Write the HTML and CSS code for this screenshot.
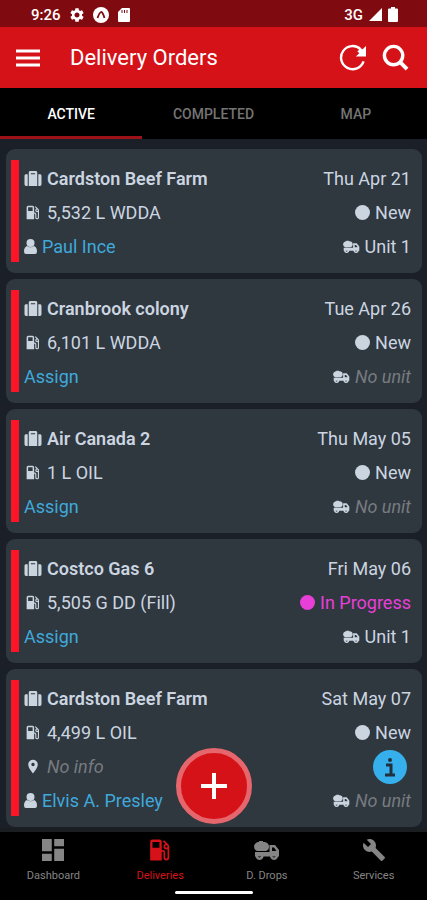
FILE: index.html
```html
<!DOCTYPE html>
<html lang="en">
<head>
    <meta charset="UTF-8">
    <meta name="viewport" content="width=device-width, initial-scale=1">
    <title>Delivery Orders</title>
    <link rel="stylesheet" href="styles.css">
</head>
<body>
    <!-- Shared icons -->
    <svg class="sprite" aria-hidden="true">
        <symbol id="suitcase" viewBox="0 0 512 512"><path d="M128 480h256V80c0-26.5-21.5-48-48-48H176c-26.5 0-48 21.5-48 48v400zm64-384h128v32H192V96zm320 80v256c0 26.5-21.5 48-48 48h-48V128h48c26.5 0 48 21.5 48 48zM96 480H48c-26.5 0-48-21.5-48-48V176c0-26.5 21.5-48 48-48h48v352z"/></symbol>
        <symbol id="fuel" viewBox="3 2 19 20"><path d="M18 10a1 1 0 0 1-1-1 1 1 0 0 1 1-1 1 1 0 0 1 1 1 1 1 0 0 1-1 1m-6 0H6V5h6m7.77 2.23l.01-.01-3.72-3.72L15 4.56l2.11 2.11C16.17 7 15.5 7.93 15.5 9a2.5 2.5 0 0 0 2.5 2.5c.36 0 .69-.08 1-.21v7.21a1 1 0 0 1-1 1 1 1 0 0 1-1-1V14a2 2 0 0 0-2-2h-1V5a2 2 0 0 0-2-2H6a2 2 0 0 0-2 2v16h10v-7.5h1.5v5A2.5 2.5 0 0 0 18 21a2.5 2.5 0 0 0 2.5-2.5V9c0-.69-.28-1.32-.73-1.77z"/></symbol>
        <symbol id="user" viewBox="0 0 26 30"><circle cx="13" cy="8" r="8"/><path d="M6 14q7 5 14 0 6 2 6 11 0 5-4 5H4q-4 0-4-5 0-9 6-11z"/></symbol>
        <symbol id="pin" viewBox="4 1 16 22"><path d="M12 2C8.13 2 5 5.13 5 9c0 5.25 7 13 7 13s7-7.75 7-13c0-3.87-3.13-7-7-7zm0 9.5a2.5 2.5 0 0 1 0-5 2.5 2.5 0 0 1 0 5z"/></symbol>
        <symbol id="truck" viewBox="0 0 26 20"><path d="M5 1h4v1h2q4 1 4 4.500T12 11H3Q0 9.500 0 6.500T4 2h1z"/><path d="M1 12h14.500V5H21l4 5v6.500H1zM18 7.500V11h4.500L20 7.500z" fill-rule="evenodd"/><path d="M5.500 12a4 4 0 1 0 .1 0zm0 2.400a1.600 1.600 0 1 1-.1 0zM20 12a4 4 0 1 0 .1 0zm0 2.400a1.600 1.600 0 1 1-.1 0z" fill-rule="evenodd"/></symbol>
        <symbol id="dashboard" viewBox="3 3 18 18"><path d="M3 13h8V3H3v10zm0 8h8v-6H3v6zm10 0h8V11h-8v10zm0-18v6h8V3h-8z"/></symbol>
        <symbol id="wrench" viewBox="0 0 24 24"><path d="M22.700 19l-9.100-9.100c.9-2.300.4-5-1.500-6.900-2-2-5-2.400-7.400-1.300L9 6 6 9 1.600 4.700C.4 7.100.9 10.100 2.900 12.100c1.900 1.900 4.600 2.400 6.900 1.500l9.100 9.100c.4.4 1 .4 1.400 0l2.300-2.300c.5-.4.5-1.100.1-1.400z"/></symbol>
        <symbol id="gear" viewBox="2 2 20 20"><path d="M19.140 12.940c.04-.3.06-.61.06-.94s-.02-.64-.07-.94l2.030-1.580c.18-.14.23-.41.12-.61l-1.920-3.320c-.12-.22-.37-.29-.59-.22l-2.390.96c-.5-.38-1.030-.7-1.620-.94l-.36-2.540c-.04-.24-.24-.41-.48-.41h-3.840c-.24 0-.43.17-.47.41l-.36 2.540c-.59.24-1.130.57-1.620.94l-2.390-.96c-.22-.08-.47 0-.59.22L2.740 8.870c-.12.21-.08.47.12.61l2.030 1.580c-.05.3-.09.63-.09.94s.02.64.07.94l-2.030 1.580c-.18.14-.23.41-.12.61l1.920 3.320c.12.22.37.29.59.22l2.390-.96c.5.38 1.030.7 1.620.94l.36 2.540c.05.24.24.41.48.41h3.840c.24 0 .44-.17.47-.41l.36-2.540c.59-.24 1.130-.56 1.620-.94l2.390.96c.22.08.47 0 .59-.22l1.920-3.320c.12-.22.07-.47-.12-.61l-2.010-1.580zM12 15.600c-1.980 0-3.600-1.620-3.600-3.600s1.620-3.600 3.600-3.600 3.600 1.620 3.600 3.600-1.620 3.600-3.600 3.600z"/></symbol>
    </svg>

    <div class="status-bar">
        <span>9:26</span>
        <svg class="status-icon"><use href="#gear"/></svg>
        <svg class="status-icon expo" viewBox="0 0 16 16"><circle cx="8" cy="8" r="8"/><path d="M4.500 11Q6.500 5.500 8 5t3.500 6" fill="none" stroke="#7f0a10" stroke-width="1.800"/></svg>
        <svg class="status-icon sd" viewBox="0 0 12 14"><path d="M4 0h7q1 0 1 1v12q0 1-1 1H1q-1 0-1-1V4z"/><path d="M4 2v3M6.500 2v3M9 2v3" stroke="#7f0a10"/></svg>
        <div class="phone">
            <span>3G</span>
            <svg class="signal" viewBox="0 0 14 14"><path d="M14 0v14H0z"/></svg>
            <svg class="battery" viewBox="0 0 10 15"><path d="M3 0h4v1.500h2q1 0 1 1V14q0 1-1 1H1q-1 0-1-1V2.500q0-1 1-1h2z"/></svg>
        </div>
    </div>

    <header class="header">
        <button class="icon-btn" aria-label="Menu">
            <svg class="menu" viewBox="0 0 24 18"><path d="M0 2h24M0 9h24M0 16h24" stroke="#fff" stroke-width="3"/></svg>
        </button>
        <h1>Delivery Orders</h1>
        <button class="icon-btn" aria-label="Refresh">
            <svg class="action" viewBox="0 0 28 28"><path d="M25.500 18A12 12 0 1 1 22.500 5.500" fill="none" stroke="#fff" stroke-width="2.500"/><path d="M28 2v11H17.500l3.500-3.500-2-2 3.500-2.500 2 .5z"/></svg>
        </button>
        <button class="icon-btn" aria-label="Search">
            <svg class="action" viewBox="0 0 28 28"><circle cx="12" cy="12" r="9.500" fill="none" stroke="#fff" stroke-width="3.500"/><path d="M18.500 18.500l7.500 7.500" stroke="#fff" stroke-width="4"/></svg>
        </button>
    </header>

    <nav class="tabs">
        <button class="tab active">ACTIVE</button>
        <button class="tab">COMPLETED</button>
        <button class="tab">MAP</button>
    </nav>

    <main class="orders">
        <article class="card">
            <div class="row">
                <svg class="icon"><use href="#suitcase"/></svg>
                <h2>Cardston Beef Farm</h2>
                <span class="right">Thu Apr 21</span>
            </div>
            <div class="row">
                <svg class="icon small"><use href="#fuel"/></svg>
                <span>5,532 L WDDA</span>
                <span class="right"><i class="dot"></i>New</span>
            </div>
            <div class="row">
                <svg class="icon person"><use href="#user"/></svg>
                <a href="#">Paul Ince</a>
                <span class="right"><svg class="unit"><use href="#truck"/></svg>Unit 1</span>
            </div>
        </article>

        <article class="card">
            <div class="row">
                <svg class="icon"><use href="#suitcase"/></svg>
                <h2>Cranbrook colony</h2>
                <span class="right">Tue Apr 26</span>
            </div>
            <div class="row">
                <svg class="icon small"><use href="#fuel"/></svg>
                <span>6,101 L WDDA</span>
                <span class="right"><i class="dot"></i>New</span>
            </div>
            <div class="row">
                <a href="#">Assign</a>
                <span class="right"><svg class="unit"><use href="#truck"/></svg><em>No unit</em></span>
            </div>
        </article>

        <article class="card">
            <div class="row">
                <svg class="icon"><use href="#suitcase"/></svg>
                <h2>Air Canada 2</h2>
                <span class="right">Thu May 05</span>
            </div>
            <div class="row">
                <svg class="icon small"><use href="#fuel"/></svg>
                <span>1 L OIL</span>
                <span class="right"><i class="dot"></i>New</span>
            </div>
            <div class="row">
                <a href="#">Assign</a>
                <span class="right"><svg class="unit"><use href="#truck"/></svg><em>No unit</em></span>
            </div>
        </article>

        <article class="card">
            <div class="row">
                <svg class="icon"><use href="#suitcase"/></svg>
                <h2>Costco Gas 6</h2>
                <span class="right">Fri May 06</span>
            </div>
            <div class="row">
                <svg class="icon small"><use href="#fuel"/></svg>
                <span>5,505 G DD (Fill)</span>
                <span class="right progress"><i class="dot"></i>In Progress</span>
            </div>
            <div class="row">
                <a href="#">Assign</a>
                <span class="right"><svg class="unit"><use href="#truck"/></svg>Unit 1</span>
            </div>
        </article>

        <article class="card">
            <div class="row">
                <svg class="icon"><use href="#suitcase"/></svg>
                <h2>Cardston Beef Farm</h2>
                <span class="right">Sat May 07</span>
            </div>
            <div class="row">
                <svg class="icon small"><use href="#fuel"/></svg>
                <span>4,499 L OIL</span>
                <span class="right"><i class="dot"></i>New</span>
            </div>
            <div class="row">
                <svg class="icon small"><use href="#pin"/></svg>
                <em>No info</em>
                <button class="info" aria-label="Order info">
                    <svg viewBox="0 0 34 34"><circle cx="17" cy="17" r="17" fill="#36b0ec"/><circle cx="17" cy="10" r="2"/><path d="M13 15h5v10M12 25h10" fill="none" stroke="#20303c" stroke-width="3"/></svg>
                </button>
            </div>
            <div class="row">
                <svg class="icon person"><use href="#user"/></svg>
                <a href="#">Elvis A. Presley</a>
                <span class="right"><svg class="unit"><use href="#truck"/></svg><em>No unit</em></span>
            </div>
        </article>
    </main>

    <footer class="bottom">
        <button class="add" aria-label="Add order">
            <svg viewBox="0 0 28 28"><path d="M14 1v26M1 14h26" stroke="#fff" stroke-width="4"/></svg>
        </button>
        <nav class="bottom-nav">
            <a href="#"><svg class="nav-icon"><use href="#dashboard"/></svg>Dashboard</a>
            <a href="#" class="current"><svg class="nav-icon"><use href="#fuel"/></svg>Deliveries</a>
            <a href="#"><svg class="nav-icon wide"><use href="#truck"/></svg>D. Drops</a>
            <a href="#"><svg class="nav-icon wide"><use href="#wrench"/></svg>Services</a>
        </nav>
        <div class="home-bar"></div>
    </footer>
</body>
</html>
```

FILE: styles.css
```css
* {
    box-sizing: border-box;
}
body {
    margin: 0;
    height: 100vh;
    display: flex;
    flex-direction: column;
    background-color: #1b2028;
    color: #cbd5e0;
    font-family: Roboto, sans-serif;
    font-size: 18px;
}
svg {
    fill: currentColor;
    flex-shrink: 0;
}
button {
    font: inherit;
    border: none;
    padding: 0;
    cursor: pointer;
}
.sprite {
    display: none;
}

/* Status bar */
.status-bar {
    display: flex;
    align-items: center;
    gap: 9px;
    height: 27px;
    padding: 2px 29px 0 31px;
    background-color: #7f0a10;
    color: #fff;
    font-size: 15px;
    font-weight: 500;
}
.status-icon {
    width: 14px;
    height: 14px;
}
.expo {
    width: 16px;
    height: 16px;
}
.sd {
    width: 12px;
}
.phone {
    display: flex;
    align-items: center;
    gap: 6px;
    margin-left: auto;
}
.signal {
    width: 13px;
    height: 13px;
}
.battery {
    width: 10px;
    height: 15px;
}

/* Header */
.header {
    display: flex;
    align-items: center;
    gap: 16px;
    height: 61px;
    padding: 0 18px 0 16px;
    background-color: #d51218;
    color: #fff;
}
.header h1 {
    flex: 1;
    margin: 0 0 0 14px;
    font-size: 22px;
    font-weight: 400;
}
.icon-btn {
    display: flex;
    background: none;
    color: #fff;
}
.menu {
    width: 24px;
    height: 18px;
}
.action {
    width: 27px;
    height: 27px;
}

/* Tabs */
.tabs {
    display: flex;
    background-color: #000;
}
.tab {
    flex: 1;
    height: 51px;
    padding-top: 4px;
    background: none;
    border-bottom: 3px solid transparent;
    color: #747474;
    font-size: 14px;
    font-weight: 500;
}
.tab.active {
    border-bottom-color: #9d1218;
    color: #fff;
}

/* Orders */
.orders {
    flex: 1;
    min-height: 0;
    overflow: hidden;
    display: flex;
    flex-direction: column;
    gap: 6px;
    padding: 10px 5px 0 6px;
}
.card {
    flex-shrink: 0;
    padding: 11px 11px 11px 5px;
    border-radius: 9px;
    background-color: #2f373f;
}
.row {
    display: flex;
    align-items: center;
    gap: 5px;
    height: 34px;
    padding: 3px 0 0 5px;
    border-left: 8px solid #fd1527;
}
.row h2 {
    margin: 0;
    font-size: 18px;
    font-weight: 600;
}
.row a {
    color: #3fa9dc;
    text-decoration: none;
}
.row em {
    color: #777b80;
}
.icon {
    width: 18px;
    height: 17px;
}
.small {
    height: 15px;
}
.person {
    width: 13px;
    height: 15px;
}
.right {
    display: flex;
    align-items: center;
    gap: 5px;
    margin-left: auto;
}
.dot {
    width: 15px;
    height: 15px;
    border-radius: 50%;
    background-color: currentColor;
}
.progress {
    color: #e83fd8;
}
.unit {
    width: 17px;
    height: 13px;
}
.info {
    width: 34px;
    height: 34px;
    margin: 0 4px 0 auto;
    background: none;
    color: #20303c;
}

/* Bottom navigation */
.bottom {
    position: relative;
    border-top: 4px solid #1b1e21;
    background-color: #000;
}
.add {
    position: absolute;
    left: 50%;
    bottom: 76px;
    display: flex;
    align-items: center;
    justify-content: center;
    width: 76px;
    height: 76px;
    border: 5px solid #e5666c;
    border-radius: 50%;
    background-color: #d51218;
    transform: translateX(-50%);
}
.add svg {
    width: 28px;
    height: 28px;
}
.bottom-nav {
    display: flex;
    padding-top: 6px;
}
.bottom-nav a {
    flex: 1;
    display: flex;
    flex-direction: column;
    align-items: center;
    gap: 6px;
    color: #858585;
    font-size: 11px;
    line-height: 16px;
    text-decoration: none;
}
.bottom-nav a.current {
    color: #d51218;
}
.nav-icon {
    width: 22px;
    height: 24px;
}
.wide {
    width: 26px;
}
.home-bar {
    width: 78px;
    height: 3px;
    margin: 7px auto 6px;
    border-radius: 2px;
    background-color: #fff;
}
```
